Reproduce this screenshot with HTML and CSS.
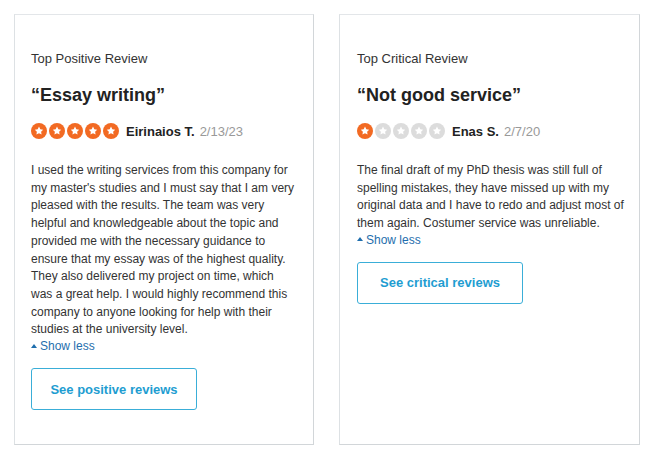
FILE: index.html
```html
<!DOCTYPE html>
<html>
<head>
<meta charset="utf-8">
<link rel="stylesheet" href="styles.css">
</head>
<body>
<div class="cards">
  <div class="card">
    <div class="label">Top Positive Review</div>
    <div class="title">“Essay writing”</div>
    <div class="meta">
      <div class="stars">
        <svg class="star on" viewBox="0 0 16 16"><circle cx="8" cy="8" r="8"/><path d="M8 3.6l1.3 2.7 2.9.4-2.1 2 .5 2.9L8 10.2l-2.6 1.4.5-2.9-2.1-2 2.9-.4z"/></svg>
        <svg class="star on" viewBox="0 0 16 16"><circle cx="8" cy="8" r="8"/><path d="M8 3.6l1.3 2.7 2.9.4-2.1 2 .5 2.9L8 10.2l-2.6 1.4.5-2.9-2.1-2 2.9-.4z"/></svg>
        <svg class="star on" viewBox="0 0 16 16"><circle cx="8" cy="8" r="8"/><path d="M8 3.6l1.3 2.7 2.9.4-2.1 2 .5 2.9L8 10.2l-2.6 1.4.5-2.9-2.1-2 2.9-.4z"/></svg>
        <svg class="star on" viewBox="0 0 16 16"><circle cx="8" cy="8" r="8"/><path d="M8 3.6l1.3 2.7 2.9.4-2.1 2 .5 2.9L8 10.2l-2.6 1.4.5-2.9-2.1-2 2.9-.4z"/></svg>
        <svg class="star on" viewBox="0 0 16 16"><circle cx="8" cy="8" r="8"/><path d="M8 3.6l1.3 2.7 2.9.4-2.1 2 .5 2.9L8 10.2l-2.6 1.4.5-2.9-2.1-2 2.9-.4z"/></svg>
      </div>
      <span class="name">Eirinaios T.</span>
      <span class="date">2/13/23</span>
    </div>
    <p class="body">I used the writing services from this company for<br>my master's studies and I must say that I am very<br>pleased with the results. The team was very<br>helpful and knowledgeable about the topic and<br>provided me with the necessary guidance to<br>ensure that my essay was of the highest quality.<br>They also delivered my project on time, which<br>was a great help. I would highly recommend this<br>company to anyone looking for help with their<br>studies at the university level.</p>
    <a class="less" href="#"><span class="caret"></span>Show less</a>
    <a class="btn" href="#">See positive reviews</a>
  </div>
  <div class="card card-critical">
    <div class="label">Top Critical Review</div>
    <div class="title">“Not good service”</div>
    <div class="meta">
      <div class="stars">
        <svg class="star on" viewBox="0 0 16 16"><circle cx="8" cy="8" r="8"/><path d="M8 3.6l1.3 2.7 2.9.4-2.1 2 .5 2.9L8 10.2l-2.6 1.4.5-2.9-2.1-2 2.9-.4z"/></svg>
        <svg class="star off" viewBox="0 0 16 16"><circle cx="8" cy="8" r="8"/><path d="M8 3.6l1.3 2.7 2.9.4-2.1 2 .5 2.9L8 10.2l-2.6 1.4.5-2.9-2.1-2 2.9-.4z"/></svg>
        <svg class="star off" viewBox="0 0 16 16"><circle cx="8" cy="8" r="8"/><path d="M8 3.6l1.3 2.7 2.9.4-2.1 2 .5 2.9L8 10.2l-2.6 1.4.5-2.9-2.1-2 2.9-.4z"/></svg>
        <svg class="star off" viewBox="0 0 16 16"><circle cx="8" cy="8" r="8"/><path d="M8 3.6l1.3 2.7 2.9.4-2.1 2 .5 2.9L8 10.2l-2.6 1.4.5-2.9-2.1-2 2.9-.4z"/></svg>
        <svg class="star off" viewBox="0 0 16 16"><circle cx="8" cy="8" r="8"/><path d="M8 3.6l1.3 2.7 2.9.4-2.1 2 .5 2.9L8 10.2l-2.6 1.4.5-2.9-2.1-2 2.9-.4z"/></svg>
      </div>
      <span class="name">Enas S.</span>
      <span class="date">2/7/20</span>
    </div>
    <p class="body">The final draft of my PhD thesis was still full of<br>spelling mistakes, they have missed up with my<br>original data and I have to redo and adjust most of<br>them again. Costumer service was unreliable.</p>
    <a class="less" href="#"><span class="caret"></span>Show less</a>
    <a class="btn" href="#">See critical reviews</a>
  </div>
</div>
</body>
</html>
```

FILE: styles.css
```css
html, body {
  margin: 0;
  padding: 0;
  background: #ffffff;
}
body {
  font-family: "Liberation Sans", Arial, sans-serif;
  color: #333;
}
.cards {
  display: flex;
  gap: 25px;
  padding: 14px 0 0 14px;
}
.card {
  width: 300px;
  height: 431px;
  box-sizing: border-box;
  border: 1px solid #d2d6d9;
  border-top-color: #e3e6e9;
  border-left-color: #dde1e4;
  padding: 36px 10px 0 16px;
  display: flex;
  flex-direction: column;
  align-items: flex-start;
}
.card-critical {
  width: 301px;
  padding-left: 17px;
  padding-right: 2px;
}
.label {
  font-size: 13px;
  line-height: 16px;
  color: #333;
}
.title {
  margin-top: 17px;
  font-size: 18px;
  line-height: 22px;
  font-weight: bold;
  color: #222;
}
.meta {
  margin-top: 17px;
  display: flex;
  align-items: center;
  height: 16px;
}
.stars {
  display: flex;
  gap: 2px;
  margin-right: 7px;
}
.star {
  width: 16px;
  height: 16px;
  display: block;
}
.star path { fill: #fff; }
.star.on circle { fill: #f26a23; }
.star.off circle { fill: #dcdcdc; }
.name {
  font-size: 13px;
  font-weight: bold;
  color: #222;
}
.date {
  font-size: 13px;
  color: #999;
  margin-left: 5px;
}
.body {
  margin: 23px 0 0 0;
  font-size: 12px;
  line-height: 17.7px;
  white-space: nowrap;
  color: #333;
}
.less {
  display: flex;
  align-items: center;
  margin-top: -2px;
  font-size: 12px;
  line-height: 18px;
  color: #1f6ead;
  text-decoration: none;
}
.caret {
  width: 0;
  height: 0;
  border-left: 3.5px solid transparent;
  border-right: 3.5px solid transparent;
  border-bottom: 4px solid #1f6ead;
  margin-right: 3px;
  margin-top: -1px;
}
.btn {
  margin-top: 13px;
  width: 166px;
  height: 42px;
  box-sizing: border-box;
  border: 1px solid #3aaed8;
  border-radius: 3px;
  display: flex;
  align-items: center;
  justify-content: center;
  font-size: 13px;
  font-weight: bold;
  color: #1e9dd1;
  text-decoration: none;
}
```
